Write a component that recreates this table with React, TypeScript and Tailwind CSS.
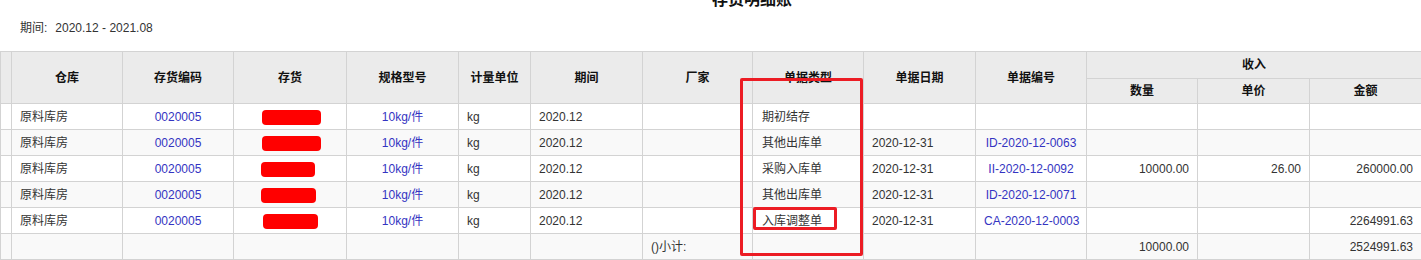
const cols = [11, 111, 111, 113, 112, 72, 112, 110, 111, 112, 111, 111, 112, 112];

type Row = {
  doc: string;
  date: string;
  no: string;
  qty: string;
  price: string;
  amount: string;
  blob: [number, number];
};

const rows: Row[] = [
  { doc: "期初结存", date: "", no: "", qty: "", price: "", amount: "", blob: [59, 2] },
  { doc: "其他出库单", date: "2020-12-31", no: "ID-2020-12-0063", qty: "", price: "", amount: "", blob: [59, 2] },
  { doc: "采购入库单", date: "2020-12-31", no: "II-2020-12-0092", qty: "10000.00", price: "26.00", amount: "260000.00", blob: [54, -4] },
  { doc: "其他出库单", date: "2020-12-31", no: "ID-2020-12-0071", qty: "", price: "", amount: "", blob: [55, -4] },
  { doc: "入库调整单", date: "2020-12-31", no: "CA-2020-12-0003", qty: "", price: "", amount: "2264991.63", blob: [55, 1] },
];

const th = "border border-[#d3d3d3] bg-[#ebebeb] font-bold text-[#111] text-center p-0";
const td = "border border-[#d3d3d3] px-2 p-0 whitespace-nowrap";
const link = "text-[#3434c2]";

export default function App() {
  return (
    <div
      className="relative flex w-[1421px] flex-col bg-white text-[12px] text-[#333]"
      style={{ fontFamily: '"Liberation Sans", "Noto Sans CJK SC", sans-serif' }}
    >
      <div className="-mt-[8px] h-[16px] pl-[712px] text-[16px] font-bold leading-[16px] text-[#111]">
        存货明细账
      </div>
      <div className="mb-[8px] flex h-[35px] items-center pl-[20px] pt-[4px] text-[12px] text-[#333]">
        <span>期间:</span>
        <span className="ml-[8px]">2020.12 - 2021.08</span>
      </div>
      <table className="w-[1421px] table-fixed border-collapse">
        <colgroup>
          {cols.map((w, i) => (
            <col key={i} style={{ width: w }} />
          ))}
        </colgroup>
        <thead>
          <tr className="h-[27px]">
            <th rowSpan={2} className={th}></th>
            <th rowSpan={2} className={th}>仓库</th>
            <th rowSpan={2} className={th}>存货编码</th>
            <th rowSpan={2} className={th}>存货</th>
            <th rowSpan={2} className={th}>规格型号</th>
            <th rowSpan={2} className={th}>计量单位</th>
            <th rowSpan={2} className={th}>期间</th>
            <th rowSpan={2} className={th}>厂家</th>
            <th rowSpan={2} className={th}>单据类型</th>
            <th rowSpan={2} className={th}>单据日期</th>
            <th rowSpan={2} className={th}>单据编号</th>
            <th colSpan={3} className={th}>收入</th>
          </tr>
          <tr className="h-[25px]">
            <th className={th}>数量</th>
            <th className={th}>单价</th>
            <th className={th}>金额</th>
          </tr>
        </thead>
        <tbody>
          {rows.map((r, i) => (
            <tr key={i} className={`h-[26px] ${i % 2 === 1 ? "bg-[#f9f9f9]" : "bg-white"}`}>
              <td className={td}></td>
              <td className={td}>原料库房</td>
              <td className={`${td} text-center ${link}`}>0020005</td>
              <td className={`${td} text-center`}>
                <span
                  className="inline-block h-[15px] rounded-[4px] bg-[#f00] align-middle"
                  style={{ width: r.blob[0], marginLeft: r.blob[1] }}
                />
              </td>
              <td className={`${td} text-center ${link}`}>10kg/件</td>
              <td className={td}>kg</td>
              <td className={td}>2020.12</td>
              <td className={td}></td>
              <td className={`${td} pl-[9px]`}>{r.doc}</td>
              <td className={td}>{r.date}</td>
              <td className={`${td} text-center ${link}`}>{r.no}</td>
              <td className={`${td} text-right`}>{r.qty}</td>
              <td className={`${td} text-right`}>{r.price}</td>
              <td className={`${td} text-right`}>{r.amount}</td>
            </tr>
          ))}
          <tr className="h-[26px] bg-[#f9f9f9]">
            <td className={td}></td>
            <td className={td}></td>
            <td className={td}></td>
            <td className={td}></td>
            <td className={td}></td>
            <td className={td}></td>
            <td className={td}></td>
            <td className={td}>()小计:</td>
            <td className={td}></td>
            <td className={td}></td>
            <td className={td}></td>
            <td className={`${td} text-right`}>10000.00</td>
            <td className={td}></td>
            <td className={`${td} text-right`}>2524991.63</td>
          </tr>
        </tbody>
      </table>
      <div className="absolute left-[740px] top-[78px] h-[178px] w-[123px] rounded-[2px] border-[3px] border-[#ec1c24]" />
      <div className="absolute left-[753px] top-[207px] h-[23px] w-[84px] rounded-[2px] border-[3px] border-[#ec1c24]" />
    </div>
  );
}
